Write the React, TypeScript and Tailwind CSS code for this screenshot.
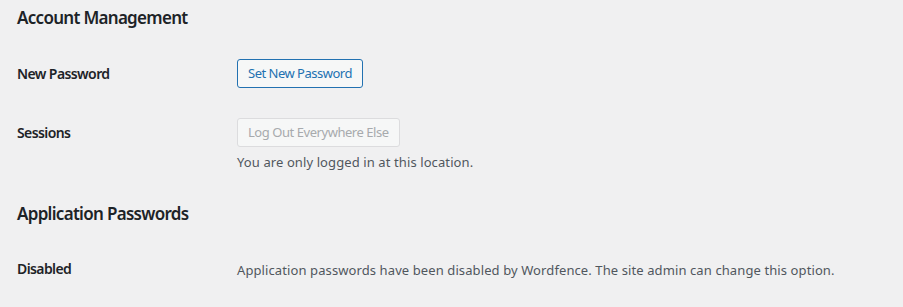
export default function App() {
  const font = { fontFamily: '"Noto Sans", "Open Sans", sans-serif' }
  return (
    <div className="w-[903px] h-[307px] bg-[#f0f0f1] text-[#1d2327] overflow-hidden" style={font}>
      <div className="pl-[17px]">
        <h2 className="pt-[7px] h-[40px] text-[17px] leading-[22px] font-semibold tracking-[-0.7px]">Account Management</h2>

        <div className="flex items-center h-[64px] pt-[2px]">
          <div className="w-[220px] text-[14px] font-semibold tracking-[-0.6px]">New Password</div>
          <button className="h-[29px] px-[10px] rounded-[3px] border border-[#2271b1] bg-[#f6f7f7] text-[#2271b1] text-[13px] leading-none tracking-[-0.5px]">
            Set New Password
          </button>
        </div>

        <div className="flex items-start pt-[14px] h-[88px]">
          <div className="w-[220px] text-[14px] font-semibold tracking-[-0.6px] pt-[4px]">Sessions</div>
          <div className="flex flex-col items-start">
            <button disabled className="h-[29px] px-[10px] rounded-[3px] border border-[#dcdcde] bg-[#f6f7f7] text-[#a7aaad] text-[13px] leading-none tracking-[-0.45px]">
              Log Out Everywhere Else
            </button>
            <p className="mt-[5px] text-[13px] leading-[20px] text-[#50575e] tracking-[0.1px]">You are only logged in at this location.</p>
          </div>
        </div>

        <h2 className="pt-[11px] h-[55px] text-[17px] leading-[22px] font-semibold tracking-[-0.7px]">Application Passwords</h2>

        <div className="flex items-start pt-[11px]">
          <div className="w-[220px] text-[14px] font-semibold tracking-[-0.6px]">Disabled</div>
          <p className="pt-[2px] text-[13px] leading-[20px] text-[#50575e] tracking-[0.1px]">
            Application passwords have been disabled by Wordfence. The site admin can change this option.
          </p>
        </div>
      </div>
    </div>
  )
}
